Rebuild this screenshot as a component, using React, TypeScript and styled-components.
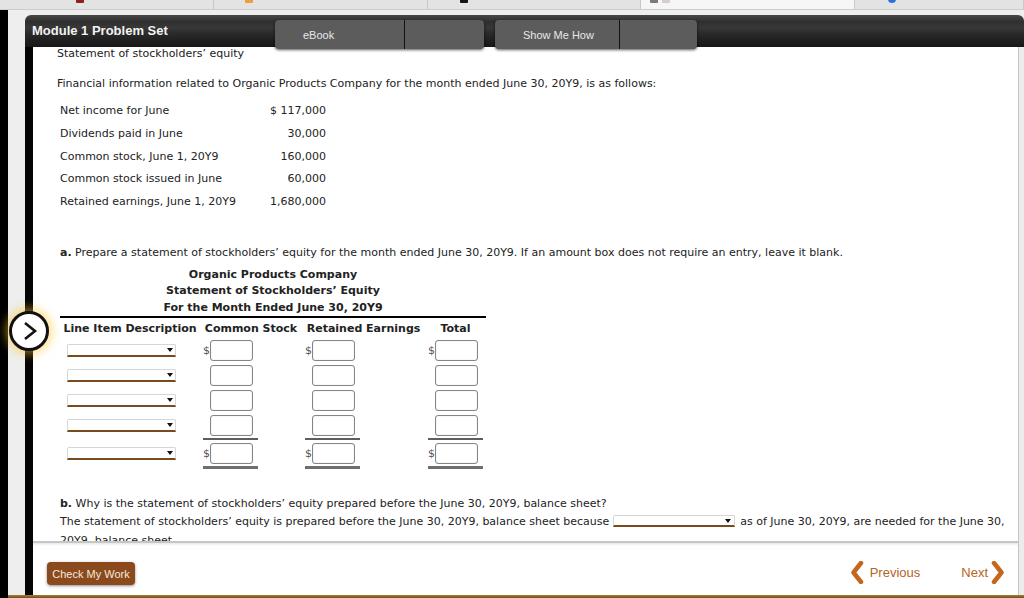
import React from "react";
import styled, { createGlobalStyle } from "styled-components";

const GlobalStyle = createGlobalStyle`
  html, body {
    margin: 0;
    padding: 0;
    background: #000;
  }

  body {
    font-family: "DejaVu Sans", Verdana, sans-serif;
  }
`;

const facts: [string, string][] = [
    ["Net income for June", "$ 117,000"],
    ["Dividends paid in June", "30,000"],
    ["Common stock, June 1, 20Y9", "160,000"],
    ["Common stock issued in June", "60,000"],
    ["Retained earnings, June 1, 20Y9", "1,680,000"],
];

type Rule = "none" | "single" | "double";

const statementRows: { dollar: boolean; rule: Rule }[] = [
    { dollar: true, rule: "none" },
    { dollar: false, rule: "none" },
    { dollar: false, rule: "none" },
    { dollar: false, rule: "single" },
    { dollar: true, rule: "double" },
];

const browserTabs = [
    { width: 214, iconAt: 76, color: "#8e1f24", round: false, active: false },
    { width: 214, iconAt: 31, color: "#e9a238", round: false, active: false },
    { width: 213, iconAt: 32, color: "#151515", round: false, active: false },
    { width: 214, iconAt: 9, color: "#7a7a7a", round: false, active: true },
    { width: 169, iconAt: 33, color: "#2d6fe3", round: true, active: false },
];

const Chevron: React.FC<{ dir: "left" | "right" }> = ({ dir }) => (
    <svg width="14" height="23" viewBox="0 0 14 23">
        <polyline
            points={dir === "left" ? "11,2 3.5,11.5 11,21" : "3,2 10.5,11.5 3,21"}
            fill="none"
            stroke="#c4671d"
            strokeWidth="4.5"
            strokeLinejoin="round"
            strokeLinecap="round"
        />
    </svg>
);

const App: React.FC = () => {
    return (
        <Screen>
            <GlobalStyle />
            <TabStrip>
                {browserTabs.map((t, i) => (
                    <BrowserTab key={i} $width={t.width} $iconAt={t.iconAt} $active={t.active}>
                        <Favicon $color={t.color} $round={t.round} />
                        {t.active && <Favicon $color="#d8cccc" $round={false} />}
                    </BrowserTab>
                ))}
            </TabStrip>
            <Main>
                <LeftEdge />
                <Workspace>
                    <Desk>
                        <Panel>
                            <PanelHeader>
                                <ModuleTitle>Module 1 Problem Set</ModuleTitle>
                                <ToolButtons>
                                    <ToolButton $width={209}>
                                        <ToolLabel $width={130}>eBook</ToolLabel>
                                    </ToolButton>
                                    <ToolButton $width={202}>
                                        <ToolLabel $width={125}>Show Me How</ToolLabel>
                                    </ToolButton>
                                </ToolButtons>
                            </PanelHeader>
                            <Body>
                                <Sheet>
                                    <ScrollArea>
                                        <Subtitle>Statement of stockholders’ equity</Subtitle>
                                        <Intro>
                                            Financial information related to Organic Products Company for the month
                                            ended June 30, 20Y9, is as follows:
                                        </Intro>
                                        <FactTable>
                                            {facts.map(([label, value]) => (
                                                <React.Fragment key={label}>
                                                    <span>{label}</span>
                                                    <FactValue>{value}</FactValue>
                                                </React.Fragment>
                                            ))}
                                        </FactTable>

                                        <Prompt $gap={31}>
                                            <b>a.</b> Prepare a statement of stockholders’ equity for the month ended
                                            June 30, 20Y9. If an amount box does not require an entry, leave it blank.
                                        </Prompt>
                                        <Statement>
                                            <StatementTitle>
                                                <div>Organic Products Company</div>
                                                <div>Statement of Stockholders’ Equity</div>
                                                <div>For the Month Ended June 30, 20Y9</div>
                                            </StatementTitle>
                                            <ColumnHeads>
                                                <span>Line Item Description</span>
                                                <span>Common Stock</span>
                                                <span>Retained Earnings</span>
                                                <span>Total</span>
                                            </ColumnHeads>
                                            {statementRows.map((row, i) => (
                                                <StatementRow key={i}>
                                                    <Selector />
                                                    {[0, 1, 2].map((c) => (
                                                        <AmountCell key={c} $rule={row.rule}>
                                                            <DollarSign>{row.dollar ? "$" : ""}</DollarSign>
                                                            <AmountBox />
                                                        </AmountCell>
                                                    ))}
                                                </StatementRow>
                                            ))}
                                        </Statement>

                                        <Prompt $gap={27}>
                                            <b>b.</b> Why is the statement of stockholders’ equity prepared before the
                                            June 30, 20Y9, balance sheet?
                                        </Prompt>
                                        <Answer>
                                            The statement of stockholders’ equity is prepared before the June 30, 20Y9,
                                            balance sheet because <InlineSelect /> as of June 30, 20Y9, are needed for
                                            the June 30, 20Y9, balance sheet.
                                        </Answer>
                                    </ScrollArea>
                                    <Footer>
                                        <CheckButton>Check My Work</CheckButton>
                                        <NavLinks>
                                            <NavLink $gap={6}>
                                                <Chevron dir="left" />
                                                Previous
                                            </NavLink>
                                            <NavLink $gap={3}>
                                                Next
                                                <Chevron dir="right" />
                                            </NavLink>
                                        </NavLinks>
                                    </Footer>
                                </Sheet>
                                <Track />
                            </Body>
                        </Panel>
                    </Desk>
                    <BottomBar />
                </Workspace>
            </Main>
            <ExpandToggle>
                <svg width="16" height="20" viewBox="0 0 16 20">
                    <polyline
                        points="3,2 13,10 3,18"
                        fill="none"
                        stroke="#111"
                        strokeWidth="2.6"
                        strokeLinejoin="miter"
                    />
                </svg>
            </ExpandToggle>
        </Screen>
    );
};

const Screen = styled.div`
    position: relative;
    width: 1024px;
    height: 598px;
    overflow: hidden;
    display: flex;
    flex-direction: column;
    background: #000;
`;

const TabStrip = styled.div`
    height: 10px;
    flex: none;
    display: flex;
    box-sizing: border-box;
    background: #e3e3e3;
    border-bottom: 1px solid #cccccc;
    overflow: hidden;
`;

const BrowserTab = styled.div<{ $width: number; $iconAt: number; $active: boolean }>`
    width: ${(p) => p.$width}px;
    flex: none;
    display: flex;
    gap: 4px;
    box-sizing: border-box;
    padding-left: ${(p) => p.$iconAt}px;
    border-right: 1px solid #c8c8c8;
    background: ${(p) => (p.$active ? "#f6f6f6" : "transparent")};
`;

const Favicon = styled.span<{ $color: string; $round: boolean }>`
    width: 8px;
    height: 8px;
    margin-top: -5px;
    border-radius: ${(p) => (p.$round ? "50%" : "1px")};
    background: ${(p) => p.$color};
`;

const Main = styled.div`
    flex: 1;
    display: flex;
    min-height: 0;
`;

const LeftEdge = styled.div`
    width: 8px;
    flex: none;
    background: #000;
`;

const Workspace = styled.div`
    flex: 1;
    min-width: 0;
    display: flex;
    flex-direction: column;
`;

const Desk = styled.div`
    flex: 1;
    min-height: 0;
    display: flex;
    padding: 5px 0 0 17px;
    background: #eeeeee;
`;

const Panel = styled.div`
    flex: 1;
    min-width: 0;
    display: flex;
    flex-direction: column;
`;

const PanelHeader = styled.div`
    height: 32px;
    flex: none;
    display: flex;
    align-items: flex-start;
    padding-left: 7px;
    border-radius: 6px 6px 0 0;
    background: linear-gradient(
        to bottom,
        #474747 0%,
        #2e2e2e 22%,
        #383838 38%,
        #262626 65%,
        #171717 100%
    );
`;

const ModuleTitle = styled.div`
    flex: 0 0 243px;
    font: 700 13px/32px "Liberation Sans", Arial, sans-serif;
    color: #f2f2f2;
`;

const ToolButtons = styled.div`
    position: relative;
    z-index: 2;
    display: flex;
    gap: 11px;
    margin-top: 5px;
`;

const ToolButton = styled.div<{ $width: number }>`
    width: ${(p) => p.$width}px;
    height: 29px;
    display: flex;
    border-radius: 4px;
    background: #5c5c5c;
    box-shadow: 0 1px 3px rgba(0, 0, 0, 0.65);
`;

const ToolLabel = styled.div<{ $width: number }>`
    width: ${(p) => p.$width}px;
    display: flex;
    align-items: center;
    box-sizing: border-box;
    padding-left: 28px;
    border-right: 1px solid #111;
    font: 11px "Liberation Sans", Arial, sans-serif;
    color: #e8e8e8;
`;

const Body = styled.div`
    flex: 1;
    min-height: 0;
    display: flex;
    background: #fff;
`;

const Sheet = styled.div`
    flex: 1;
    min-width: 0;
    display: flex;
    flex-direction: column;
    border-left: 8px solid #050505;
`;

const Track = styled.div`
    width: 6px;
    flex: none;
    box-sizing: border-box;
    background: #ececec;
    border-left: 1px solid #c4c4c4;
`;

const ScrollArea = styled.div`
    height: 494px;
    flex: none;
    overflow: hidden;
    box-sizing: border-box;
    padding: 0 8px 0 24px;
    font-size: 11px;
    color: #222;
`;

const Subtitle = styled.p`
    margin: -1px 0 0;
    line-height: 16px;
`;

const Intro = styled.p`
    margin: 14px 0 0;
    line-height: 16px;
`;

const FactTable = styled.div`
    display: grid;
    grid-template-columns: 210px 56px;
    margin: 8px 0 0 3px;
    line-height: 22.8px;
`;

const FactValue = styled.span`
    text-align: right;
    white-space: nowrap;
`;

const Prompt = styled.p<{ $gap: number }>`
    margin: ${(p) => p.$gap}px 0 0 3px;
    line-height: 16px;
`;

const Statement = styled.div`
    width: 426px;
    margin: 6px 0 0 3px;
`;

const StatementTitle = styled.div`
    text-align: center;
    font-weight: 700;
    line-height: 16.5px;
    border-bottom: 2px solid #000;
`;

const columns = "140px 102px 123px 61px";

const ColumnHeads = styled.div`
    display: grid;
    grid-template-columns: ${columns};
    padding-top: 3px;
    line-height: 16px;
    font-weight: 700;
    text-align: center;
    white-space: nowrap;
`;

const StatementRow = styled.div`
    display: grid;
    grid-template-columns: ${columns};
    align-items: start;
    padding-top: 3px;
`;

const Selector = styled.div`
    position: relative;
    width: 109px;
    height: 13px;
    margin: 4px 0 0 7px;
    box-sizing: border-box;
    background: #fff;
    border: 1px solid #d6d6d6;
    border-bottom: 2px solid #7a4a1f;
    border-radius: 2px 2px 0 0;

    &::after {
        content: "";
        position: absolute;
        right: 2px;
        top: 3px;
        border-left: 3px solid transparent;
        border-right: 3px solid transparent;
        border-top: 4px solid #111;
    }
`;

const AmountCell = styled.div<{ $rule: Rule }>`
    display: flex;
    width: 55px;
    margin-left: 3px;
    padding-bottom: ${(p) => (p.$rule === "none" ? 1 : 2)}px;
    border-bottom: ${(p) =>
        p.$rule === "single" ? "2px solid #5e5e5e" : p.$rule === "double" ? "3px solid #6e6e6e" : "none"};
`;

const DollarSign = styled.span`
    width: 7px;
    text-align: right;
    line-height: 21px;
    color: #555;
`;

const AmountBox = styled.div`
    width: 43px;
    height: 21px;
    box-sizing: border-box;
    border: 1px solid #858585;
    border-radius: 3px;
    box-shadow: inset 0 0 1px #bbb;
    background: #fff;
`;

const Answer = styled.p`
    margin: 0 0 0 3px;
    line-height: 19px;
`;

const InlineSelect = styled.span`
    position: relative;
    display: inline-block;
    width: 122px;
    height: 12px;
    margin-right: 2px;
    vertical-align: -2px;
    box-sizing: border-box;
    border: 1px solid #d6d6d6;
    border-bottom: 2px solid #7a4a1f;
    border-radius: 2px 2px 0 0;

    &::after {
        content: "";
        position: absolute;
        right: 3px;
        top: 3px;
        border-left: 3px solid transparent;
        border-right: 3px solid transparent;
        border-top: 4px solid #111;
    }
`;

const Footer = styled.div`
    flex: 1;
    display: flex;
    align-items: flex-start;
    justify-content: space-between;
    padding: 19px 13px 0 14px;
    border-top: 2px solid #c6c6c6;
    box-shadow: inset 0 3px 3px -2px rgba(0, 0, 0, 0.12);
`;

const CheckButton = styled.button`
    width: 88px;
    height: 23px;
    padding: 0;
    border: none;
    border-radius: 4px;
    background: #8b4a1d;
    color: #f4e8dc;
    font: 11px "Liberation Sans", Arial, sans-serif;
    box-shadow: 0 1px 3px rgba(0, 0, 0, 0.45);
`;

const NavLinks = styled.div`
    display: flex;
    gap: 41px;
    margin-top: -1px;
`;

const NavLink = styled.div<{ $gap: number }>`
    display: flex;
    align-items: center;
    gap: ${(p) => p.$gap}px;
    font: 13px "Liberation Sans", Arial, sans-serif;
    color: #b5641f;
`;

const BottomBar = styled.div`
    height: 3px;
    flex: none;
    background: linear-gradient(to bottom, #a67e38, #6e4f1d);
`;

const ExpandToggle = styled.div`
    position: absolute;
    left: 9px;
    top: 311px;
    width: 40px;
    height: 40px;
    box-sizing: border-box;
    display: flex;
    align-items: center;
    justify-content: center;
    padding-left: 2px;
    border-radius: 50%;
    border: 3px solid #111;
    background: #fff;
    box-shadow: 0 0 10px 3px rgba(255, 196, 40, 0.55);
`;

export default App;
